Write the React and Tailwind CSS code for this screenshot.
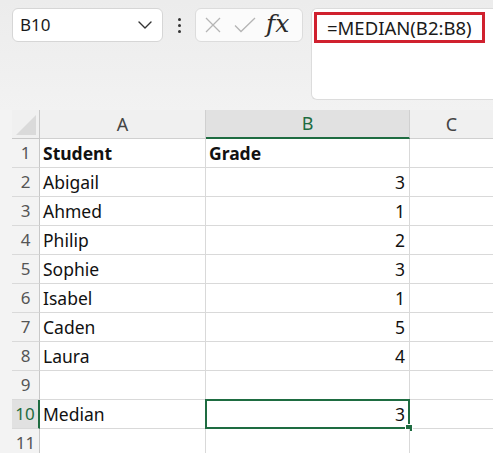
import React from "react";

const FONT = { fontFamily: '"Noto Sans", "Open Sans", sans-serif' };

const rows = [
  { n: 1, a: "Student", b: "Grade", bold: true },
  { n: 2, a: "Abigail", b: "3" },
  { n: 3, a: "Ahmed", b: "1" },
  { n: 4, a: "Philip", b: "2" },
  { n: 5, a: "Sophie", b: "3" },
  { n: 6, a: "Isabel", b: "1" },
  { n: 7, a: "Caden", b: "5" },
  { n: 8, a: "Laura", b: "4" },
  { n: 9, a: "", b: "" },
  { n: 10, a: "Median", b: "3", sel: true },
  { n: 11, a: "", b: "" },
];

function Chevron() {
  return (
    <svg width="14" height="8" viewBox="0 0 14 8" fill="none">
      <path d="M1 1l6 6 6-6" stroke="#333" strokeWidth="1.4" strokeLinecap="round" strokeLinejoin="round" />
    </svg>
  );
}

function Row({ r }) {
  const grade = r.bold ? <span className="font-bold">{r.b}</span> : r.b;
  return (
    <>
      <div
        className={`h-[29px] flex items-center justify-center border-b border-[#d9d9d9] text-[17px] ${
          r.sel
            ? "bg-[#e1e1e1] text-[#1e6c41] border-r-2 border-r-[#1e6c41]"
            : "bg-[#f3f3f3] text-[#555] border-r border-r-[#c8c8c8]"
        }`}
      >
        {r.n}
      </div>
      <div
        className={`h-[29px] flex items-center pl-[3px] border-b border-r border-[#d9d9d9] bg-white text-[17.5px] text-[#111] ${
          r.bold ? "font-bold" : ""
        }`}
      >
        {r.a}
      </div>
      <div
        className={`relative h-[29px] flex items-center border-b border-r border-[#d9d9d9] bg-white text-[17.5px] text-[#111] ${
          r.bold ? "justify-start pl-[3px]" : "justify-end pr-[4px]"
        }`}
      >
        {grade}
        {r.sel && (
          <>
            <div className="absolute -left-px -top-px -right-px -bottom-px border-2 border-[#1e6c41]" />
            <div className="absolute -right-[4px] -bottom-[4px] w-[8px] h-[8px] bg-[#1e6c41] border border-white" />
          </>
        )}
      </div>
      <div className="h-[29px] border-b border-[#d9d9d9] bg-white" />
    </>
  );
}

export default function App() {
  return (
    <div className="w-[493px] h-[453px] overflow-hidden bg-[#f3f3f3]" style={FONT}>
      {/* Top formula bar */}
      <div className="h-[110px] bg-gradient-to-b from-[#ececec] to-[#f2f2f2] flex items-start pt-[8px] pl-[12px]">
        <div className="w-[151px] h-[34px] bg-white border border-[#d6d6d6] rounded-[6px] flex items-center justify-between pl-[7px] pr-[10px]">
          <span className="text-[17px] text-[#1a1a1a]">B10</span>
          <Chevron />
        </div>
        <div className="w-[32px] h-[34px] flex flex-col items-center justify-center gap-[3px]">
          <span className="w-[3px] h-[3px] bg-[#333] rounded-full" />
          <span className="w-[3px] h-[3px] bg-[#333] rounded-full" />
          <span className="w-[3px] h-[3px] bg-[#333] rounded-full" />
        </div>
        <div className="w-[108px] h-[34px] bg-[#fbfbfb] border border-[#dcdcdc] rounded-[6px] flex items-center pl-[8px] gap-[12px]">
          <svg width="18" height="18" viewBox="0 0 18 18" fill="none">
            <path d="M2 2l14 14M16 2L2 16" stroke="#b5b5b5" strokeWidth="1.3" />
          </svg>
          <svg width="22" height="16" viewBox="0 0 22 16" fill="none">
            <path d="M1 8.5l6 6L21 1" stroke="#b5b5b5" strokeWidth="1.3" />
          </svg>
          <span
            className="italic text-[25px] text-[#2a2a2a] leading-none -mt-[4px] -ml-[2px]"
            style={{ fontFamily: '"DejaVu Serif", "Liberation Serif", serif' }}
          >
            fx
          </span>
        </div>
        <div className="ml-[8px] flex-1 h-[92px] bg-white border border-[#dcdcdc] rounded-l-[6px] border-r-0 pt-[3px] pl-[2px]">
          <div className="w-[171px] h-[31px] border-[3px] border-[#d0212f] flex items-center pl-[10px] text-[18.5px] text-[#1a1a1a]">
            =MEDIAN(B2:B8)
          </div>
        </div>
      </div>

      {/* Grid */}
      <div className="ml-[12px] grid grid-cols-[28px_166px_204px_1fr]">
        <div className="relative h-[29px] bg-[#f0f0f0] border-b border-r border-[#c8c8c8]">
          <svg className="absolute right-[3px] bottom-[3px]" width="20" height="20" viewBox="0 0 20 20">
            <path d="M20 0L20 20L0 20Z" fill="#dadada" />
          </svg>
        </div>
        <div className="h-[29px] bg-[#f0f0f0] border-b border-r border-[#d0d0d0] flex items-center justify-center text-[18px] text-[#444]">
          A
        </div>
        <div className="h-[29px] bg-[#e1e1e1] border-b-2 border-b-[#1e6c41] border-r border-r-[#d0d0d0] flex items-center justify-center text-[18px] text-[#1e6c41]">
          B
        </div>
        <div className="h-[29px] bg-[#f0f0f0] border-b border-[#d0d0d0] flex items-center justify-center text-[18px] text-[#444]">
          C
        </div>
        {rows.map((r) => (
          <Row key={r.n} r={r} />
        ))}
      </div>
    </div>
  );
}
